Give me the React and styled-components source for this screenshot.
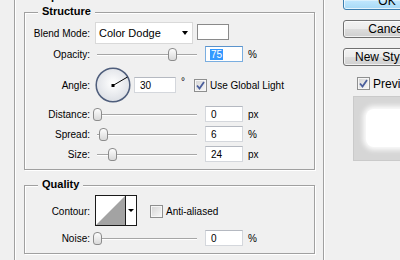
import React from "react"
import styled, { createGlobalStyle } from "styled-components"

const GlobalStyle = createGlobalStyle`
  html, body {
    margin: 0;
    padding: 0;
    background: #f0f0f0;
    overflow: hidden;
  }
  body {
    font-family: "Liberation Sans", Arial, sans-serif;
    font-size: 10px;
    color: #000;
  }
`

const Dialog = styled.div`
  display: flex;
  align-items: flex-start;
  width: 400px;
  height: 260px;
  padding-left: 14px;
  box-sizing: border-box;
  overflow: hidden;
`

const EffectPanel = styled.div`
  position: relative;
  flex: 0 0 310px;
  box-sizing: border-box;
  margin-top: -3px;
  border: 1px solid #a0a0a0;
  box-shadow: 1px 1px 0 #fff, inset 1px 1px 0 #fff;
  padding: 14px 8px 30px 9px;
`

const Group = styled.div`
  position: relative;
  display: flex;
  flex-direction: column;
  border: 1px solid #a0a0a0;
  box-shadow: 1px 1px 0 #fff, inset 1px 1px 0 #fff;
  padding: ${(p) => p.$pad};
  margin-top: ${(p) => p.$mt || 0}px;
`

const Title = styled.span`
  position: absolute;
  top: -8px;
  left: 13px;
  padding: 0 4px;
  background: #f0f0f0;
  font-size: 11px;
  font-weight: bold;
  line-height: 13px;
`

const Row = styled.div`
  display: flex;
  align-items: center;
  height: ${(p) => p.$h}px;
  margin-top: ${(p) => p.$mt || 0}px;
`

const Label = styled.span`
  width: 65px;
  margin-right: 5px;
  text-align: right;
  white-space: nowrap;
`

const Select = styled.div`
  display: flex;
  align-items: center;
  width: 98px;
  height: 22px;
  box-sizing: border-box;
  padding-left: 3px;
  background: #fff;
  border: 1px solid #d9d9d9;
  font-size: 11px;
`

const DropArrow = styled.span`
  margin-left: auto;
  margin-right: 4px;
  width: 0;
  height: 0;
  border-left: 3.5px solid transparent;
  border-right: 3.5px solid transparent;
  border-top: 4px solid #000;
`

const Swatch = styled.span`
  width: 32px;
  height: 16px;
  box-sizing: border-box;
  margin: 0 0 3px 4px;
  border: 1px solid #8a8a8a;
  background: #fff;
`

const Slider = styled.div`
  position: relative;
  flex: 0 0 100px;
  height: 16px;
  margin: 0 8px 0 2px;
  &::before {
    content: "";
    position: absolute;
    left: 0;
    right: 0;
    top: 8px;
    height: 1px;
    background: #a6a6a6;
    box-shadow: 0 1px 0 #fff;
  }
`

const Thumb = styled.span`
  position: absolute;
  top: 2px;
  width: 9px;
  height: 13px;
  margin-left: -4px;
  box-sizing: border-box;
  border: 1px solid #8c8c8c;
  border-radius: 4px 4px 3px 3px;
  background: linear-gradient(#fdfdfd, #d9d9d9);
`

const Field = styled.span`
  display: flex;
  align-items: center;
  width: ${(p) => p.$w || 38}px;
  height: 16px;
  box-sizing: border-box;
  padding-left: 5px;
  background: #fff;
  border: 1px solid ${(p) => (p.$focus ? "#7aaee0" : "#d4d7dc")};
  border-top-color: ${(p) => (p.$focus ? "#5a93cc" : "#b5b9c1")};
`

const Selected = styled.span`
  background: #3399ff;
  color: #fff;
  padding: 0 1px;
  margin-left: -1px;
`

const Unit = styled.span`
  margin-left: 5px;
`

const Degree = styled.span`
  align-self: flex-start;
  margin: 9px 0 0 5px;
  font-size: 10px;
`

const Box = styled.span`
  position: relative;
  flex: 0 0 13px;
  height: 13px;
  box-sizing: border-box;
  margin-left: ${(p) => p.$ml || 0}px;
  border: 1px solid #8e8f8f;
  box-shadow: inset 0 0 0 1px #f6f6f6;
  background: linear-gradient(135deg, #d4d4d4, #f9f9f9);
  svg {
    position: absolute;
    left: 1px;
    top: 1px;
  }
`

const BoxText = styled.span`
  margin-left: 3px;
  white-space: nowrap;
  font-size: ${(p) => p.$size || 10}px;
`

const Contour = styled.div`
  display: flex;
  width: 42px;
  height: 31px;
  box-sizing: border-box;
  margin-bottom: 1px;
  border: 1px solid #1a1a1a;
  background: #fff;
`

const ContourArrow = styled.span`
  flex: 1;
  display: flex;
  align-items: center;
  justify-content: center;
  border-left: 1px solid #1a1a1a;
  &::after {
    content: "";
    border-left: 3px solid transparent;
    border-right: 3px solid transparent;
    border-top: 3px solid #000;
  }
`

const Side = styled.div`
  display: flex;
  flex-direction: column;
  flex: 0 0 88px;
  margin: -8px 0 0 19px;
`

const Button = styled.div`
  display: flex;
  align-items: center;
  justify-content: center;
  height: 18px;
  margin-bottom: 10px;
  box-sizing: border-box;
  border: 1px solid ${(p) => (p.$primary ? "#3c7fb1" : "#707070")};
  border-radius: 3px;
  font-size: 12px;
  white-space: nowrap;
  background: ${(p) =>
    p.$primary
      ? "linear-gradient(#eaf6fd 0%, #d9f0fc 50%, #bee6fd 51%, #a7d9f5 100%)"
      : "linear-gradient(#f2f2f2 0%, #ebebeb 50%, #dddddd 51%, #cfcfcf 100%)"};
  box-shadow: inset 0 0 0 1px rgba(255, 255, 255, 0.7);
`

const PreviewToggle = styled.div`
  display: flex;
  align-items: center;
  height: 13px;
  margin: 0 0 0 14px;
  padding-top: 1px;
`

const Preview = styled.div`
  width: 70px;
  height: 65px;
  box-sizing: border-box;
  margin: 6px 0 0 10px;
  padding: 12px 0 0 12px;
  background: #d6d6d6;
  border: 1px solid #cacaca;
`

const PreviewShape = styled.div`
  width: 50px;
  height: 38px;
  border-radius: 8px;
  background: #fff;
  box-shadow: 0 0 5px 3px rgba(255, 255, 255, 0.9);
`

const Tick = () => (
  <svg width="9" height="9" viewBox="0 0 9 9">
    <path d="M1 4.5 L3.5 7.5 L8 1" fill="none" stroke="#4a5e9c" strokeWidth="1.8" />
  </svg>
)

const Dial = () => (
  <svg width="36" height="36" viewBox="0 0 36 36">
    <defs>
      <radialGradient id="dialFill" cx="50%" cy="45%" r="55%">
        <stop offset="0" stopColor="#ffffff" />
        <stop offset="1" stopColor="#dcdfe5" />
      </radialGradient>
    </defs>
    <circle cx="18" cy="18" r="16.8" fill="url(#dialFill)" stroke="#4f5e7c" strokeWidth="1.5" />
    <line x1="18" y1="18.5" x2="32.5" y2="10" stroke="#000" strokeWidth="1" />
    <rect x="16.5" y="17" width="3" height="3" fill="#000" />
  </svg>
)

const SliderRow = ({ label, pos, value, unit, focus, mt }) => (
  <Row $h={16} $mt={mt}>
    <Label>{label}</Label>
    <Slider>
      <Thumb style={{ left: `${pos}%` }} />
    </Slider>
    <Field $focus={focus}>{focus ? <Selected>{value}</Selected> : value}</Field>
    <Unit>{unit}</Unit>
  </Row>
)

const App = () => {
  return (
    <>
      <GlobalStyle />
      <Dialog>
        <EffectPanel>
          <Title>Drop Shadow</Title>
          <Group $pad="9px 0 7px">
            <Title>Structure</Title>
            <Row $h={22}>
              <Label>Blend Mode:</Label>
              <Select>
                Color Dodge
                <DropArrow />
              </Select>
              <Swatch />
            </Row>
            <SliderRow label="Opacity:" pos={75} value="75" unit="%" focus mt={2} />
            <Row $h={36} $mt={5}>
              <Label>Angle:</Label>
              <Dial />
              <Field $w={42} style={{ marginLeft: 3 }}>30</Field>
              <Degree>°</Degree>
              <Box $ml={9}>
                <Tick />
              </Box>
              <BoxText>Use Global Light</BoxText>
            </Row>
            <SliderRow label="Distance:" pos={0} value="0" unit="px" mt={3} />
            <SliderRow label="Spread:" pos={6} value="6" unit="%" mt={4} />
            <SliderRow label="Size:" pos={15} value="24" unit="px" mt={4} />
          </Group>
          <Group $pad="10px 0 7px" $mt={15}>
            <Title>Quality</Title>
            <Row $h={30}>
              <Label>Contour:</Label>
              <Contour>
                <svg width="29" height="29" viewBox="0 0 29 29">
                  <polygon points="0,29 29,0 29,29" fill="#a3a3a3" />
                </svg>
                <ContourArrow />
              </Contour>
              <Box $ml={13} />
              <BoxText>Anti-aliased</BoxText>
            </Row>
            <SliderRow label="Noise:" pos={0} value="0" unit="%" mt={4} />
          </Group>
        </EffectPanel>
        <Side>
          <Button $primary>OK</Button>
          <Button>Cancel</Button>
          <Button>New Style...</Button>
          <PreviewToggle>
            <Box>
              <Tick />
            </Box>
            <BoxText $size={12}>Preview</BoxText>
          </PreviewToggle>
          <Preview>
            <PreviewShape />
          </Preview>
        </Side>
      </Dialog>
    </>
  )
}

export default App
